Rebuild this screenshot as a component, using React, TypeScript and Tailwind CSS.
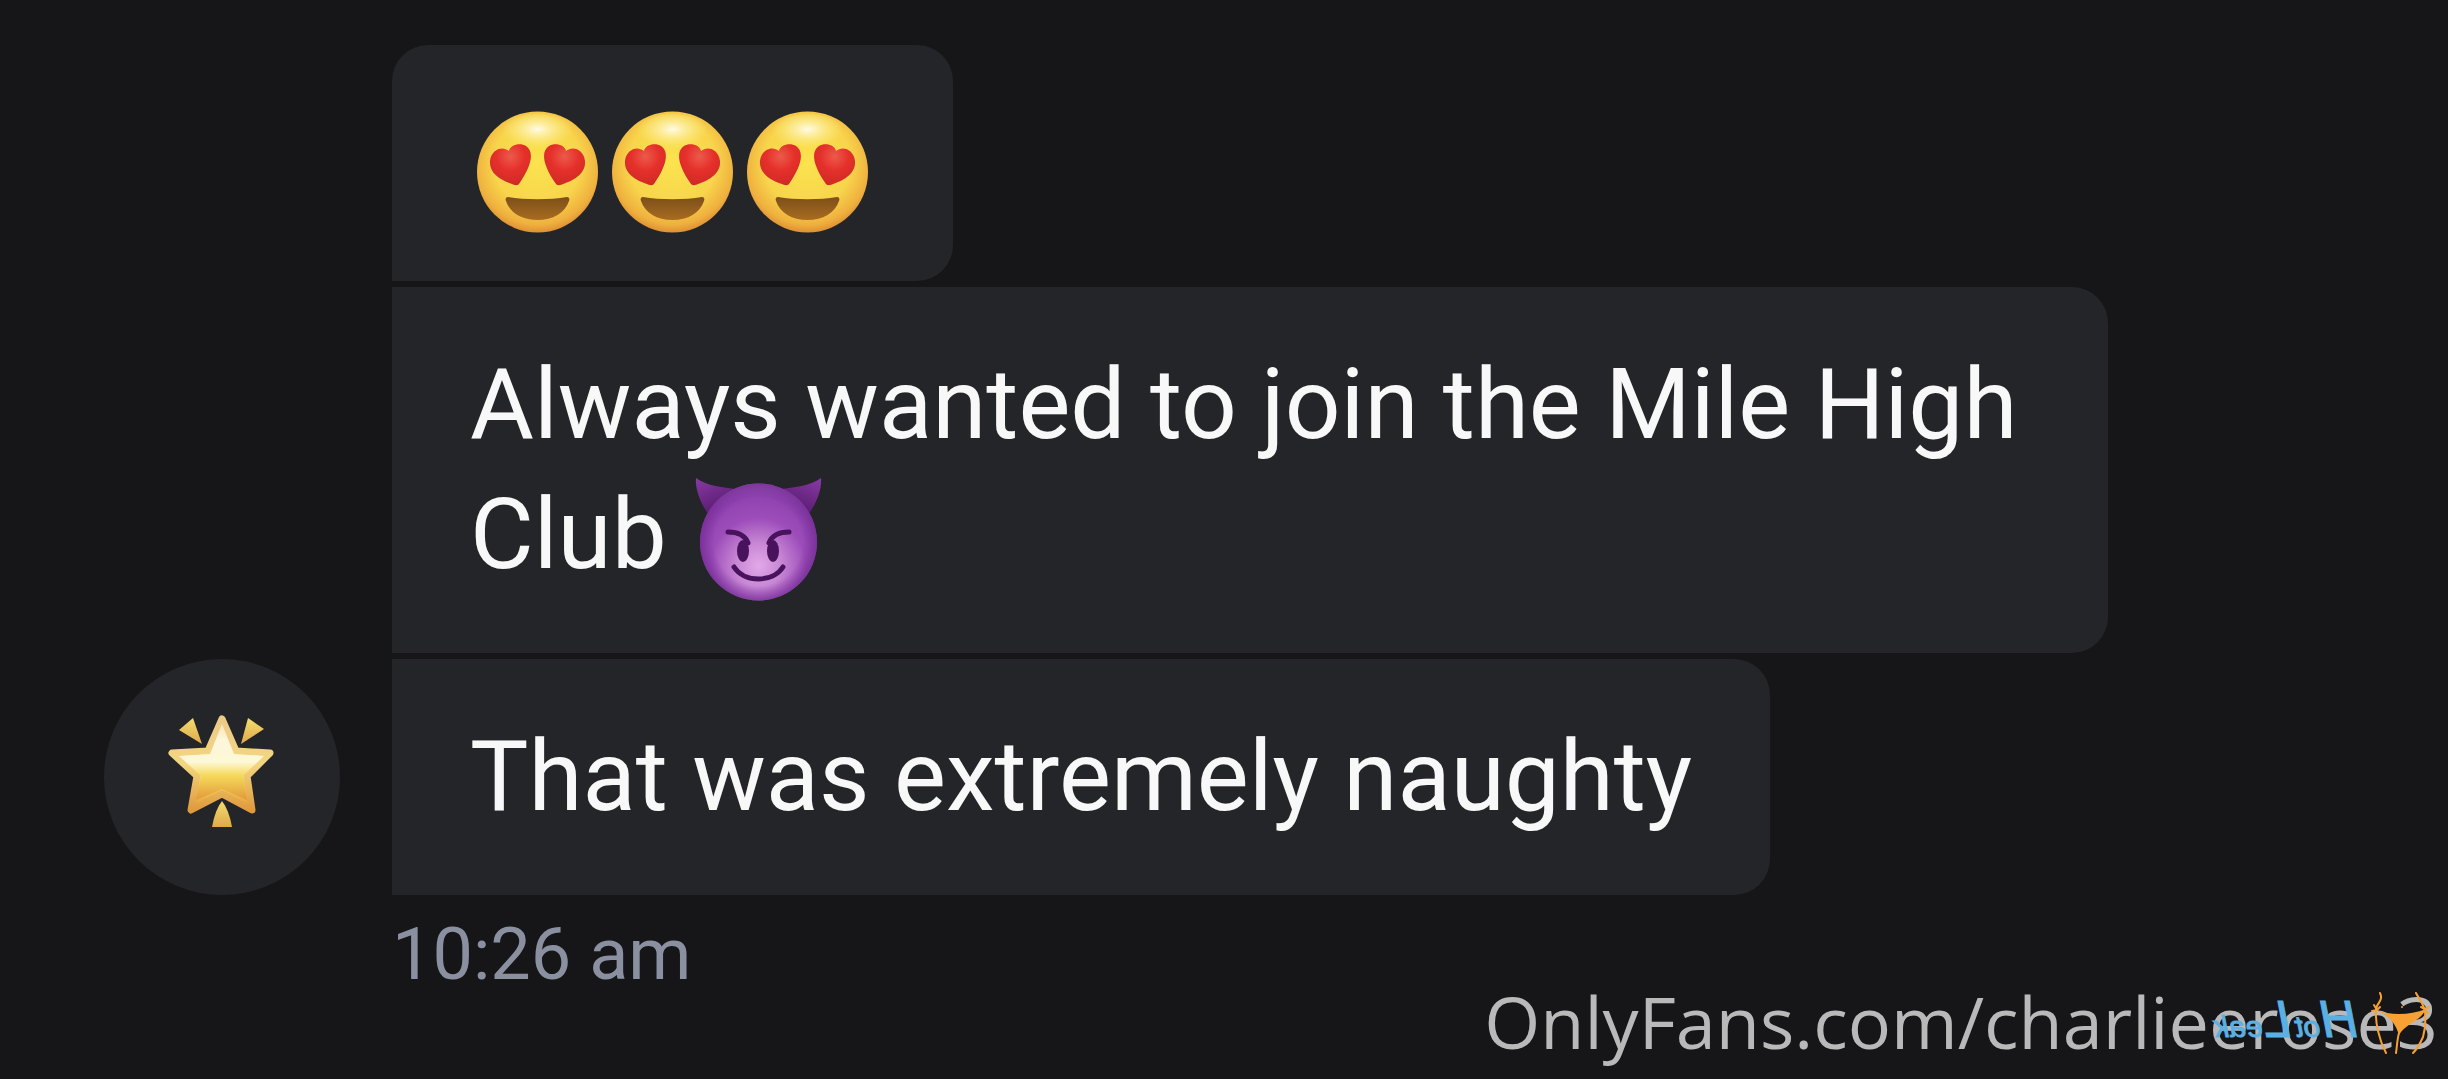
import type { ReactNode } from "react";

function HeartEyes() {
  return (
    <svg viewBox="0 0 135 122" role="img" aria-label="Smiling face with heart eyes" className="h-[122px] w-[135px]">
      <defs>
        <radialGradient id="faceFill" cx="0.5" cy="0.42" r="0.6">
          <stop offset="0" stopColor="#fbe34e" />
          <stop offset="0.6" stopColor="#f8d54c" />
          <stop offset="0.86" stopColor="#efb03e" />
          <stop offset="1" stopColor="#d98632" />
        </radialGradient>
        <radialGradient id="faceShine" cx="0.5" cy="0.4" r="0.5">
          <stop offset="0" stopColor="#fffbe6" />
          <stop offset="1" stopColor="#fdf08a" stopOpacity="0" />
        </radialGradient>
        <radialGradient id="heartFill" cx="0.5" cy="0.3" r="0.7">
          <stop offset="0" stopColor="#ec5a4c" />
          <stop offset="0.5" stopColor="#e5302a" />
          <stop offset="1" stopColor="#cf2a26" />
        </radialGradient>
        <linearGradient id="mouthFill" x1="0" y1="0" x2="0" y2="1">
          <stop offset="0" stopColor="#7d4f1a" />
          <stop offset="1" stopColor="#a86c20" />
        </linearGradient>
        <path
          id="heart"
          d="M39 40 C40 34 50 31 56 35 C65 41 61 56 49 73 C47 75 44 74 42 73 C30 69 19 62 20 50 C21 39 32 34 39 40Z"
        />
      </defs>
      <circle cx="67.5" cy="61" r="60.5" fill="url(#faceFill)" />
      <ellipse cx="67.5" cy="22" rx="36" ry="19" fill="url(#faceShine)" />
      <g fill="url(#heartFill)">
        <use href="#heart" />
        <use href="#heart" transform="translate(135 0) scale(-1 1)" />
      </g>
      <path
        d="M38 86 C55 89 80 89 97 86 C99 86 100 88 99 90 C95 102 83 109 67.5 109 C52 109 40 102 36 90 C35 88 36 86 38 86Z"
        fill="url(#mouthFill)"
      />
    </svg>
  );
}

function Devil() {
  return (
    <svg viewBox="0 0 135 130" role="img" aria-label="Smiling face with horns" className="-my-4 inline-block h-[130px] w-[135px] align-middle">
      <defs>
        <radialGradient id="devilFill" cx="0.5" cy="0.7" r="0.7">
          <stop offset="0" stopColor="#e2a8e8" />
          <stop offset="0.28" stopColor="#c786d4" />
          <stop offset="0.58" stopColor="#9d4dba" />
          <stop offset="0.85" stopColor="#8f43b0" />
          <stop offset="1" stopColor="#9a55b4" />
        </radialGradient>
        <linearGradient id="hornFill" x1="0" y1="0" x2="0.5" y2="1">
          <stop offset="0" stopColor="#8a3aa6" />
          <stop offset="1" stopColor="#551a6c" />
        </linearGradient>
        <radialGradient id="devilEdge" cx="0.5" cy="0.5" r="0.5">
          <stop offset="0.75" stopColor="#6f2590" stopOpacity="0" />
          <stop offset="1" stopColor="#6f2590" stopOpacity="0.65" />
        </radialGradient>
      </defs>
      <g fill="url(#hornFill)">
        <path id="horn" d="M5 1 C16 9 30 10 44 12 L18 38 C9 26 4 12 5 1Z" />
        <use href="#horn" transform="translate(135 0) scale(-1 1)" />
      </g>
      <circle cx="67.5" cy="65" r="58.5" fill="url(#devilFill)" />
      <circle cx="67.5" cy="65" r="58.5" fill="url(#devilEdge)" />
      <g fill="none" stroke="#48135c" strokeLinecap="round" strokeWidth="5">
        <path d="M37 55 C47 55 54 58 57 66" />
        <path d="M98 55 C88 55 81 58 78 66" />
        <path d="M43 90 C53 106 82 106 92 90" />
      </g>
      <ellipse cx="52" cy="74" rx="6" ry="11" fill="#48135c" />
      <ellipse cx="82" cy="74" rx="6" ry="11" fill="#48135c" />
    </svg>
  );
}

function GlowingStar() {
  return (
    <svg viewBox="1 7 140 140" role="img" aria-label="Glowing star" className="size-[140px]">
      <defs>
        <linearGradient id="starFill" x1="0" y1="0" x2="0" y2="1">
          <stop offset="0" stopColor="#f8e6b4" />
          <stop offset="0.2" stopColor="#fdf6dc" />
          <stop offset="0.5" stopColor="#fdf8d6" />
          <stop offset="0.68" stopColor="#f5d95a" />
          <stop offset="1" stopColor="#e2983a" />
        </linearGradient>
        <linearGradient id="starEdge" x1="0" y1="0" x2="0" y2="1">
          <stop offset="0" stopColor="#eccb88" />
          <stop offset="0.5" stopColor="#f3d680" />
          <stop offset="1" stopColor="#e09a3c" />
        </linearGradient>
        <linearGradient id="rayFill" x1="0" y1="0" x2="0" y2="1">
          <stop offset="0" stopColor="#f3dd70" />
          <stop offset="1" stopColor="#dfa94a" />
        </linearGradient>
      </defs>
      <path
        d="M71 19 L85 51 L119 53 L96 76 L101 110 L71 94 L40 110 L46 76 L21 53 L57 51Z"
        fill="url(#starFill)"
        stroke="url(#starEdge)"
        strokeWidth="7"
        strokeLinejoin="round"
      />
      <path d="M71 24 L83 54 L113 56 L92 76 L96 100 L71 89 L45 100 L50 76 L28 56 L59 54Z" fill="url(#starFill)" />
      <g fill="url(#rayFill)">
        <path d="M28 30 L42 18 L51 44Z" />
        <path d="M113 29 L97 18 L90 44Z" />
        <path d="M61 127 Q64 110 71 101 Q78 110 81 127Z" />
      </g>
    </svg>
  );
}

function Bubble({ children, first = false }: { children: ReactNode; first?: boolean }) {
  return (
    <p
      className={
        first
          ? "flex w-fit rounded-r-[36px] rounded-tl-[36px] bg-[#242528] px-[78px] pt-[66px] pb-12"
          : "w-fit max-w-[1716px] rounded-r-[36px] bg-[#242528] px-[78px] py-[53px]"
      }
    >
      {children}
    </p>
  );
}

function Watermark() {
  return (
    <footer className="absolute right-[10px] bottom-1 font-['Open_Sans',sans-serif] text-[72px] leading-[108px] text-[#b9b9b9]">
      <a href="#profile">OnlyFans.com/charlieerose3</a>
      <div className="absolute right-2 bottom-4 flex items-center gap-3">
        <span className="flex -scale-x-100 items-baseline font-['Liberation_Sans',sans-serif] text-[30px] leading-[64px] whitespace-nowrap text-[#5bb0e3] italic [-webkit-text-stroke:1px_#5bb0e3]">
          <span className="text-[52px]">H</span>
          <span>ot</span>
          <span className="ml-1 text-[52px]">L</span>
          <span>eak</span>
        </span>
        <svg viewBox="0 0 60 66" aria-hidden="true" className="h-[66px] w-[60px]">
          <g fill="none" stroke="#f7a034" strokeWidth="2" strokeLinecap="round" strokeLinejoin="round">
            <path d="M10 3 C13 9 9 12 7 16 C5 23 6 32 8 41 C10 50 13 57 16 63" />
            <path d="M46 3 C49 9 54 14 55 22 C56 32 55 40 53 47 C50 54 47 59 43 63" />
            <path d="M29 43 C27 50 27 57 26 63" />
            <path d="M7 20 L2 21 M7 20 L4 15 M7 20 L10 17 M55 19 L59 17 M55 19 L51 17 M55 20 L58 23" />
          </g>
          <path d="M6 20 C22 26 40 25 56 19 C50 32 36 33 29 45 C26 36 22 27 6 20Z" fill="#f7a034" />
          <circle cx="32" cy="17" r="1" fill="#f7a034" />
        </svg>
      </div>
    </footer>
  );
}

export default function App() {
  return (
    <div className="relative min-h-screen bg-[#161618] pt-[45px] pl-[104px] font-['Roboto',sans-serif]">
      <main className="text-[98px] leading-[130px] text-[#f8f8f8]">
        <div className="flex items-end gap-[52px]">
          <div className="flex size-[236px] shrink-0 items-center justify-center rounded-full bg-[#242528]">
            <GlowingStar />
          </div>
          <div className="flex flex-col gap-[6px]">
            <Bubble first>
              <HeartEyes />
              <HeartEyes />
              <HeartEyes />
            </Bubble>
            <Bubble>
              Always wanted to join the Mile High Club <Devil />
            </Bubble>
            <Bubble>That was extremely naughty</Bubble>
          </div>
        </div>
        <time className="mt-2 ml-[288px] block text-[72px] leading-[104px] text-[#8b90a0]">10:26 am</time>
      </main>
      <Watermark />
    </div>
  );
}
